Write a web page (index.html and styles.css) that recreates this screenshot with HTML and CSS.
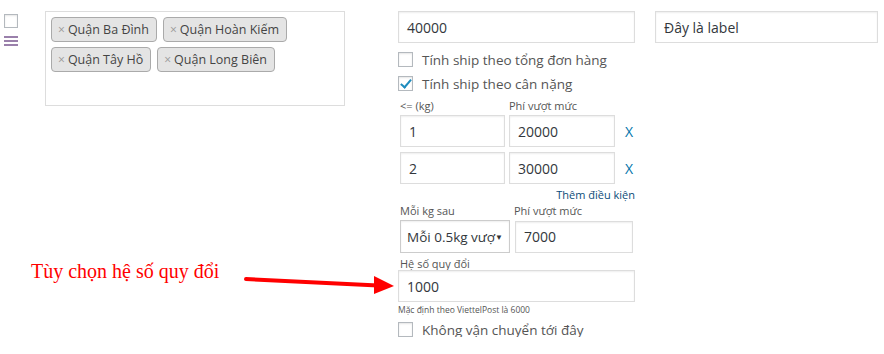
FILE: index.html
```html
<!DOCTYPE html>
<html lang="vi">
<head>
	<meta charset="UTF-8">
	<title>Shipping zone</title>
	<link rel="stylesheet" href="styles.css">
</head>
<body>
	<div class="zone_row">
		<div class="handle_col">
			<span class="checkbox"></span>
			<span class="drag_handle"><i></i><i></i><i></i></span>
		</div>
		<div class="tags_box">
			<span class="tag"><b>×</b>Quận Ba Đình</span>
			<span class="tag"><b>×</b>Quận Hoàn Kiếm</span>
			<span class="tag"><b>×</b>Quận Tây Hồ</span>
			<span class="tag"><b>×</b>Quận Long Biên</span>
		</div>
		<div class="ship_col">
			<div class="field">40000</div>
			<label class="check_row"><span class="checkbox"></span>Tính ship theo tổng đơn hàng</label>
			<label class="check_row"><span class="checkbox checked"></span>Tính ship theo cân nặng</label>
			<div class="weight_table">
				<div class="sub_row labels">
					<span class="w_kg">&lt;= (kg)</span>
					<span>Phí vượt mức</span>
				</div>
				<div class="sub_row">
					<div class="field w_kg">1</div>
					<div class="field w_fee">20000</div>
					<a class="remove">X</a>
				</div>
				<div class="sub_row">
					<div class="field w_kg">2</div>
					<div class="field w_fee">30000</div>
					<a class="remove">X</a>
				</div>
				<a class="add_link">Thêm điều kiện</a>
				<div class="sub_row labels second">
					<span class="w_sel">Mỗi kg sau</span>
					<span>Phí vượt mức</span>
				</div>
				<div class="sub_row last">
					<div class="field select w_sel"><span>Mỗi 0.5kg vượ</span><span class="caret">▼</span></div>
					<div class="field w_extra">7000</div>
				</div>
			</div>
			<div class="small_label">Hệ số quy đổi</div>
			<div class="field">1000</div>
			<div class="note">Mặc định theo ViettelPost là 6000</div>
			<label class="check_row last"><span class="checkbox"></span>Không vận chuyển tới đây</label>
		</div>
		<div class="label_col">
			<div class="field">Đây là label</div>
		</div>
	</div>

	<div class="callout">
		<span class="callout_text">Tùy chọn hệ số quy đổi</span>
		<svg class="callout_arrow" width="160" height="24" viewBox="0 0 160 24">
			<line x1="2" y1="6" x2="134" y2="12.5" stroke="#f00" stroke-width="4" stroke-linecap="round"/>
			<polygon points="130,3 150,13 130,21" fill="#f00"/>
		</svg>
	</div>
</body>
</html>
```

FILE: styles.css
```css
* {
	box-sizing: border-box;
}
html, body {
	margin: 0;
	padding: 0;
	background: #fff;
	font-family: "Open Sans", "Noto Sans", sans-serif;
	font-size: 14px;
	color: #333;
}
.zone_row {
	display: flex;
	align-items: flex-start;
	padding: 11px 0 0 4px;
}

/* left handle */
.handle_col {
	width: 14px;
	margin-top: 3px;
	display: flex;
	flex-direction: column;
	gap: 8px;
}
.checkbox {
	display: inline-block;
	position: relative;
	width: 15px;
	height: 15px;
	border: 1px solid #b4b9be;
	background: #fff;
	box-shadow: inset 0 1px 2px rgba(0,0,0,.1);
	flex: none;
}
.handle_col .checkbox {
	width: 14px;
	height: 14px;
}
.checkbox.checked::before {
	content: "";
	position: absolute;
	left: 4px;
	top: 0px;
	width: 4px;
	height: 9px;
	border: solid #1e8cbe;
	border-width: 0 2.5px 2.5px 0;
	transform: rotate(40deg);
}
.drag_handle {
	display: flex;
	flex-direction: column;
	gap: 2px;
}
.drag_handle i {
	display: block;
	height: 2px;
	background: #9a80ab;
}

/* tag selector */
.tags_box {
	margin-left: 27px;
	width: 300px;
	height: 95px;
	border: 1px solid #ddd;
	padding: 5px 5px;
	display: flex;
	flex-wrap: wrap;
	align-content: flex-start;
	gap: 5px 6px;
}
.tag {
	display: inline-flex;
	align-items: center;
	height: 25px;
	padding: 0 7px 0 6px;
	background: #e4e4e4;
	border: 1px solid #aaa;
	border-radius: 4px;
	color: #444;
	font-size: 12.5px;
}
.tag b {
	font-weight: normal;
	color: #999;
	font-size: 12px;
	margin-right: 3px;
}

/* shipping column */
.ship_col {
	margin-left: 53px;
	width: 237px;
	display: flex;
	flex-direction: column;
}
.field {
	height: 32px;
	border: 1px solid #ddd;
	box-shadow: inset 0 1px 2px rgba(0,0,0,.07);
	background: #fff;
	padding: 0 8px;
	display: flex;
	align-items: center;
	color: #32373c;
	font-size: 14px;
}
.check_row {
	display: flex;
	align-items: center;
	gap: 9px;
	margin-top: 9px;
	height: 15px;
	color: #555;
	font-size: 13.5px;
}
.check_row.last {
	margin-top: 6px;
}
.weight_table {
	padding-left: 2px;
	display: flex;
	flex-direction: column;
}
.sub_row {
	display: flex;
	align-items: center;
	gap: 4px;
	margin-bottom: 5px;
}
.sub_row.last {
	margin-bottom: 0;
}
.sub_row.labels {
	height: 14px;
	margin: 7px 0 3px;
	font-size: 11px;
	color: #555;
}
.sub_row.labels.second {
	margin: 2px 0 3px;
}
.sub_row.labels span {
	display: block;
}
.w_kg {
	width: 105px;
}
.w_fee {
	width: 106px;
}
.w_sel {
	width: 110px;
}
.w_extra {
	width: 118px;
	margin-left: 1px;
}
.select {
	height: 33px;
	padding: 0 6px;
	white-space: nowrap;
	border-color: #ccc;
	font-size: 13.5px;
}
.caret {
	margin-left: auto;
	font-size: 8px;
	color: #333;
}
.remove {
	margin-left: 6px;
	color: #0073aa;
	font-size: 14px;
}
.add_link {
	align-self: flex-end;
	margin-top: -2px;
	font-size: 11px;
	color: #0a4b78;
	height: 14px;
}
.small_label {
	margin: 3px 0 0 2px;
	font-size: 11px;
	color: #555;
	height: 14px;
}
.note {
	margin-top: 2px;
	font-size: 8.5px;
	color: #555;
	height: 12px;
}

/* label column */
.label_col {
	margin-left: 20px;
	width: 223px;
}

/* annotation */
.callout {
	position: absolute;
	left: 31px;
	top: 259px;
	display: flex;
	align-items: flex-start;
}
.callout_text {
	font-family: "Liberation Serif", serif;
	font-size: 20px;
	color: #f00;
	line-height: 24px;
}
.callout_arrow {
	margin: 14px 0 0 25px;
}
```
